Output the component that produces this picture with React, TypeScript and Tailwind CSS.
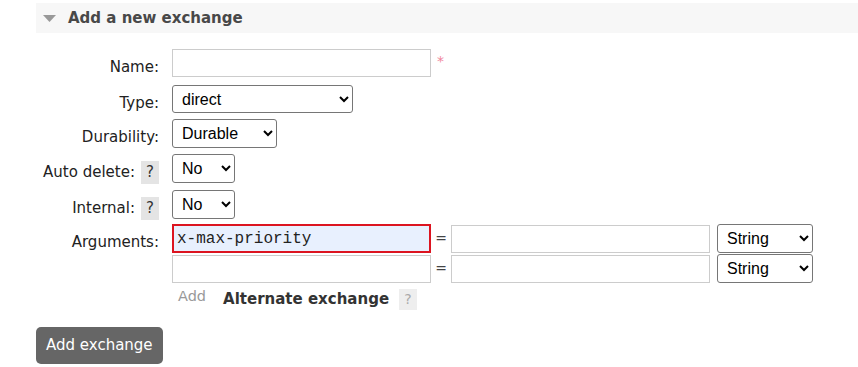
import { ReactNode } from 'react'

const labelFont = "font-['DejaVu_Sans',Verdana,sans-serif]"
const ctrlFont = "font-['Liberation_Sans',Arial,sans-serif]"

function Help() {
  return (
    <span className="ml-[6px] inline-flex h-[23px] w-[18px] shrink-0 items-center justify-center bg-[#e4e4e4] text-[15px] text-[#333333]">
      ?
    </span>
  )
}

function Row({ label, help, className = '', children }: { label: string; help?: boolean; className?: string; children: ReactNode }) {
  return (
    <div className={`flex items-start ${className}`}>
      <div className="flex h-[28px] w-[123px] items-start justify-end pt-[7px]">
        <span className="whitespace-nowrap text-[15px] leading-[23px] text-[#222222]">{label}</span>
        {help && <Help />}
      </div>
      <div className="ml-[13px] flex items-start">{children}</div>
    </div>
  )
}

function Select({ value, options, width, height = 'h-[29px]' }: { value: string; options: string[]; width: string; height?: string }) {
  return (
    <select
      defaultValue={value}
      className={`${ctrlFont} ${width} ${height} rounded-[3px] border border-[#767676] bg-white pl-[5px] text-[16px] leading-[20px] text-black`}
    >
      {options.map(o => (
        <option key={o}>{o}</option>
      ))}
    </select>
  )
}

export default function App() {
  return (
    <div className={`${labelFont} min-h-screen bg-white pl-[36px] pt-[3px]`}>
      <div className="flex h-[30px] items-center bg-[#f7f7f7] pl-[7px]">
        <svg width="13" height="7" viewBox="0 0 13 7" className="mt-[1px]">
          <polygon points="0,0 13,0 6.5,7" fill="#999999" />
        </svg>
        <h2 className="ml-[12px] text-[15px] font-bold text-[#484848]">Add a new exchange</h2>
      </div>

      <div className="mt-[16px]">
        <Row label="Name:">
          <input className={`${ctrlFont} h-[28px] w-[259px] border border-[#cccccc] bg-white px-[3px] text-[16px]`} />
          <span className="ml-[6px] mt-[4px] text-[14px] leading-[16px] text-[#f0849a]">*</span>
        </Row>

        <Row label="Type:" className="mt-[8px]">
          <Select value="direct" options={['direct', 'fanout', 'headers', 'topic']} width="w-[181px]" height="h-[28px]" />
        </Row>

        <Row label="Durability:" className="mt-[6px]">
          <Select value="Durable" options={['Durable', 'Transient']} width="w-[105px]" />
        </Row>

        <Row label="Auto delete:" help className="mt-[6px]">
          <Select value="No" options={['No', 'Yes']} width="w-[63px]" />
        </Row>

        <Row label="Internal:" help className="mt-[7px]">
          <Select value="No" options={['No', 'Yes']} width="w-[63px]" />
        </Row>

        <Row label="Arguments:" className="mt-[5px]">
          <div className="flex flex-col">
            <div className="flex h-[29px] items-center">
              <input
                defaultValue="x-max-priority"
                className="h-[29px] w-[259px] border-2 border-[#dc1420] bg-[#e8f0fe] pl-[3px] font-['Liberation_Mono','Courier_New',monospace] text-[16px] text-[#222222] outline-none"
              />
              <span className="w-[20px] text-center text-[14px] text-[#444444]">=</span>
              <input className="h-[28px] w-[259px] border border-[#cccccc] bg-white" />
              <div className="ml-[7px] flex">
                <Select value="String" options={['String', 'Number', 'Boolean', 'List']} width="w-[96px]" />
              </div>
            </div>
            <div className="mt-[1px] flex h-[29px] items-center">
              <input className="h-[28px] w-[259px] border border-[#cccccc] bg-white" />
              <span className="w-[20px] text-center text-[14px] text-[#444444]">=</span>
              <input className="h-[28px] w-[259px] border border-[#cccccc] bg-white" />
              <div className="ml-[7px] flex">
                <Select value="String" options={['String', 'Number', 'Boolean', 'List']} width="w-[96px]" />
              </div>
            </div>
            <div className="mt-[6px] flex h-[21px] items-start">
              <span className="ml-[6px] -mt-[1px] text-[14.5px] leading-[16px] text-[#999999]">Add</span>
              <span className="ml-[17px] mt-[1px] text-[15px] font-bold leading-[18px] text-[#333333]">Alternate exchange</span>
              <span className="ml-[10px] inline-flex h-[21px] w-[18px] items-center justify-center bg-[#eeeeee] text-[14px] text-[#aaaaaa]">
                ?
              </span>
            </div>
          </div>
        </Row>
      </div>

      <button className="mt-[17px] flex h-[37px] items-center rounded-[5px] bg-[#666666] px-[10px] text-[15px] text-white">
        Add exchange
      </button>
    </div>
  )
}
